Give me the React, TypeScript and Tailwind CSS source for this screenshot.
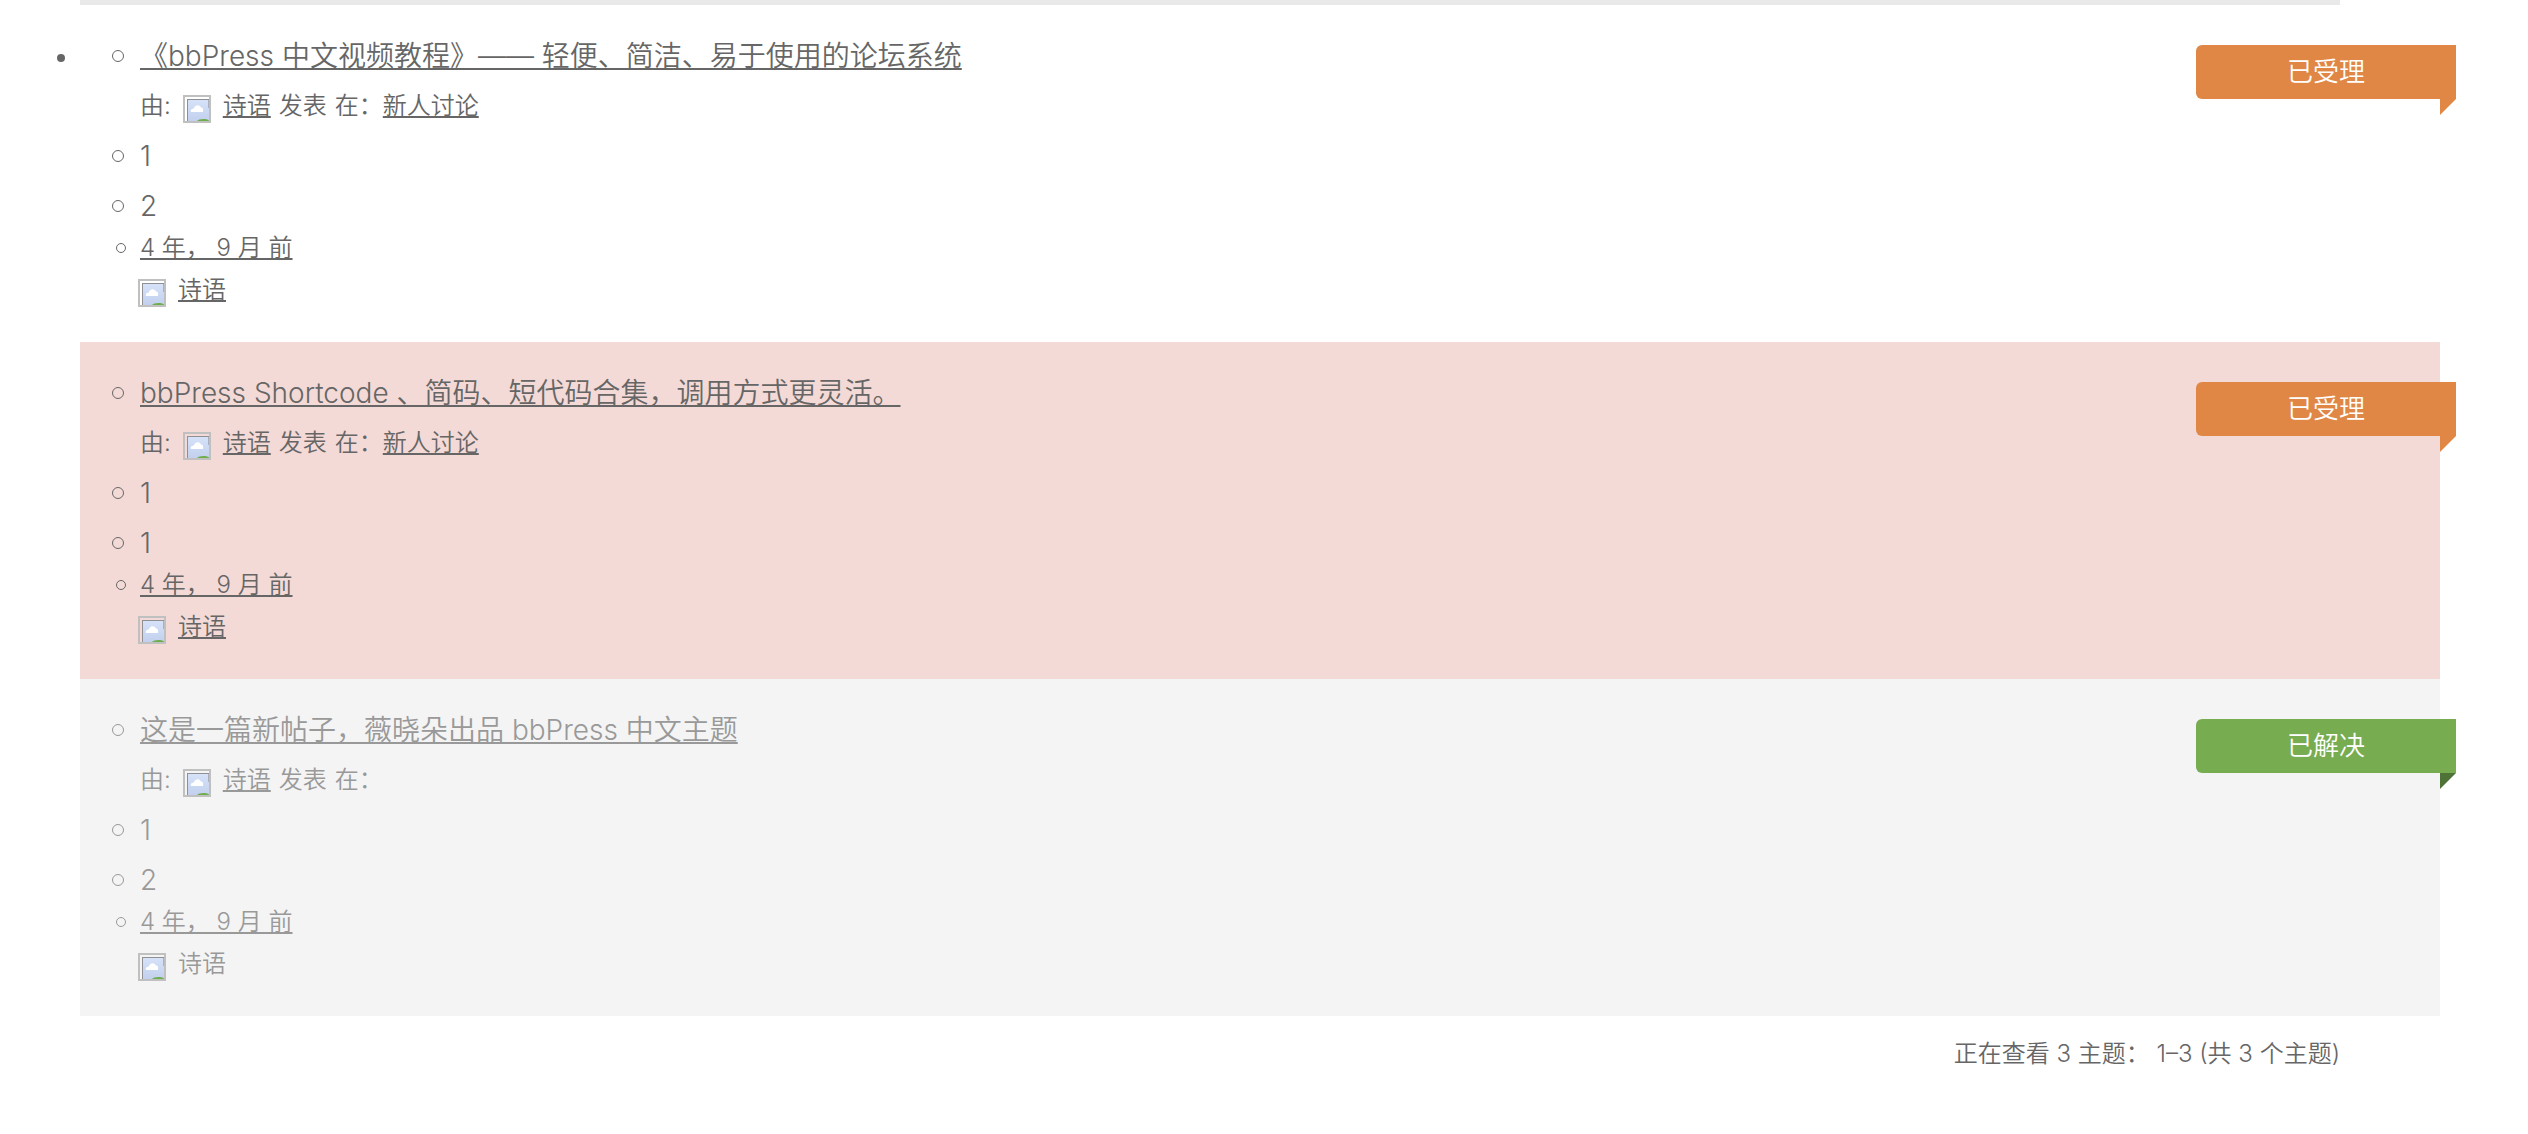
import React from 'react';
import clsx from 'clsx';

type TopicStatus = 'accepted' | 'resolved';
type TopicVariant = 'plain' | 'highlighted' | 'closed';

interface Topic {
  id: number;
  title: string;
  author: string;
  forum?: string;
  voices: number;
  posts: number;
  freshness: string;
  status: TopicStatus;
  variant: TopicVariant;
}

const TOPICS: Topic[] = [
  {
    id: 1,
    title: '《bbPress 中文视频教程》—— 轻便、简洁、易于使用的论坛系统',
    author: '诗语',
    forum: '新人讨论',
    voices: 1,
    posts: 2,
    freshness: '4 年， 9 月 前',
    status: 'accepted',
    variant: 'plain',
  },
  {
    id: 2,
    title: 'bbPress Shortcode 、简码、短代码合集，调用方式更灵活。',
    author: '诗语',
    forum: '新人讨论',
    voices: 1,
    posts: 1,
    freshness: '4 年， 9 月 前',
    status: 'accepted',
    variant: 'highlighted',
  },
  {
    id: 3,
    title: '这是一篇新帖子，薇晓朵出品 bbPress 中文主题',
    author: '诗语',
    voices: 1,
    posts: 2,
    freshness: '4 年， 9 月 前',
    status: 'resolved',
    variant: 'closed',
  },
];

const STATUS = {
  accepted: { label: '已受理', ribbon: 'bg-[#e08745]', fold: 'text-[#e08745]' },
  resolved: { label: '已解决', ribbon: 'bg-[#78ac51]', fold: 'text-[#4f7336]' },
};

const VARIANT = {
  plain: 'bg-white',
  highlighted: 'bg-[#f4dad7]',
  closed: 'bg-[#f4f4f4] text-[#999]',
};

const Bullet = ({ small = false }: { small?: boolean }) => (
  <span className="flex w-7 shrink-0">
    <span
      className={clsx(
        'rounded-full border border-current',
        small ? 'ml-1 size-2.5' : 'size-3'
      )}
    />
  </span>
);

const TextLink = ({ children }: { children: React.ReactNode }) => (
  <a
    href="#"
    className="underline decoration-2 underline-offset-2 [text-decoration-skip-ink:none]"
  >
    {children}
  </a>
);

// Placeholder shown when the avatar has not loaded
const Avatar = () => (
  <svg viewBox="0 0 28 28" className="mt-1.5 size-7 shrink-0" aria-hidden="true">
    <defs>
      <linearGradient id="sky" x1="0" y1="0" x2="0" y2="1">
        <stop offset="0" stopColor="#d6e2f8" />
        <stop offset="1" stopColor="#c2d0ee" />
      </linearGradient>
    </defs>
    <rect x="4" y="4" width="22" height="22" fill="#8f9093" />
    <rect x="5" y="5" width="21" height="21" fill="url(#sky)" />
    <path d="M25 5h1v8h-1z" fill="#aab0bd" />
    <path d="M8 17c-1-2 1-3.500 3-3.500 0-3 5-5 7-1 2 0 2.500 2 2 4.500z" fill="#fff" />
    <path d="M14 26c1.500-2.300 9-2.800 12-.500v.500z" fill="#6fae4c" />
    <rect x="1" y="1" width="26" height="26" fill="none" stroke="#c0c0c0" strokeWidth="2" />
  </svg>
);

const StatusRibbon = ({ status }: { status: TopicStatus }) => {
  const { label, ribbon, fold } = STATUS[status];

  return (
    <div className="absolute -right-4 top-10 w-[260px]">
      <div
        className={clsx(
          'h-[54px] rounded-l-md text-center text-[26px] leading-[54px] text-white',
          ribbon
        )}
      >
        {label}
      </div>
      <svg viewBox="0 0 16 16" className={clsx('ml-auto size-4', fold)} aria-hidden="true">
        <path d="M0 0h16L0 16z" fill="currentColor" />
      </svg>
    </div>
  );
};

const TopicItem = ({ topic }: { topic: Topic }) => (
  <li className={clsx('relative pt-[26px] pb-[27px] pl-8', VARIANT[topic.variant])}>
    <ul>
      <li>
        <div className="flex h-[50px] items-center">
          <Bullet />
          <TextLink>{topic.title}</TextLink>
        </div>
        <p className="flex h-[50px] items-center gap-2 pl-7 text-2xl">
          <span className="pr-1">由:</span>
          <Avatar />
          <span className="pl-1">
            <TextLink>{topic.author}</TextLink>
          </span>
          <span>发表</span>
          <span>
            在：
            {topic.forum && <TextLink>{topic.forum}</TextLink>}
          </span>
        </p>
      </li>
      <li className="flex h-[50px] items-center">
        <Bullet />
        {topic.voices}
      </li>
      <li className="flex h-[50px] items-center">
        <Bullet />
        {topic.posts}
      </li>
      <li className="text-2xl">
        <div className="flex h-[34px] items-center">
          <Bullet small />
          <TextLink>{topic.freshness}</TextLink>
        </div>
        <p className="flex h-[50px] items-center gap-3 pl-[26px]">
          <Avatar />
          {topic.variant === 'closed' ? topic.author : <TextLink>{topic.author}</TextLink>}
        </p>
      </li>
    </ul>
    <StatusRibbon status={topic.status} />
  </li>
);

export default function App() {
  return (
    <main
      lang="zh-CN"
      className="min-h-screen bg-white pr-[88px] font-['Inter','Noto_Sans_CJK_SC',sans-serif] text-[28px] font-[350] text-[#666]"
    >
      <div className="mr-[100px] ml-20 h-[5px] bg-[#e9e9e9]" />
      <ul>
        <li className="flex">
          <span className="w-20 shrink-0 pt-[49px] pl-[57px]">
            <span className="block size-2 rounded-full bg-current" />
          </span>
          <ul className="flex-1">
            {TOPICS.map((topic) => (
              <TopicItem key={topic.id} topic={topic} />
            ))}
          </ul>
        </li>
      </ul>
      <p className="mr-[100px] py-[18px] text-right text-2xl leading-10">
        正在查看 3 主题： 1–3 (共 3 个主题)
      </p>
    </main>
  );
}
